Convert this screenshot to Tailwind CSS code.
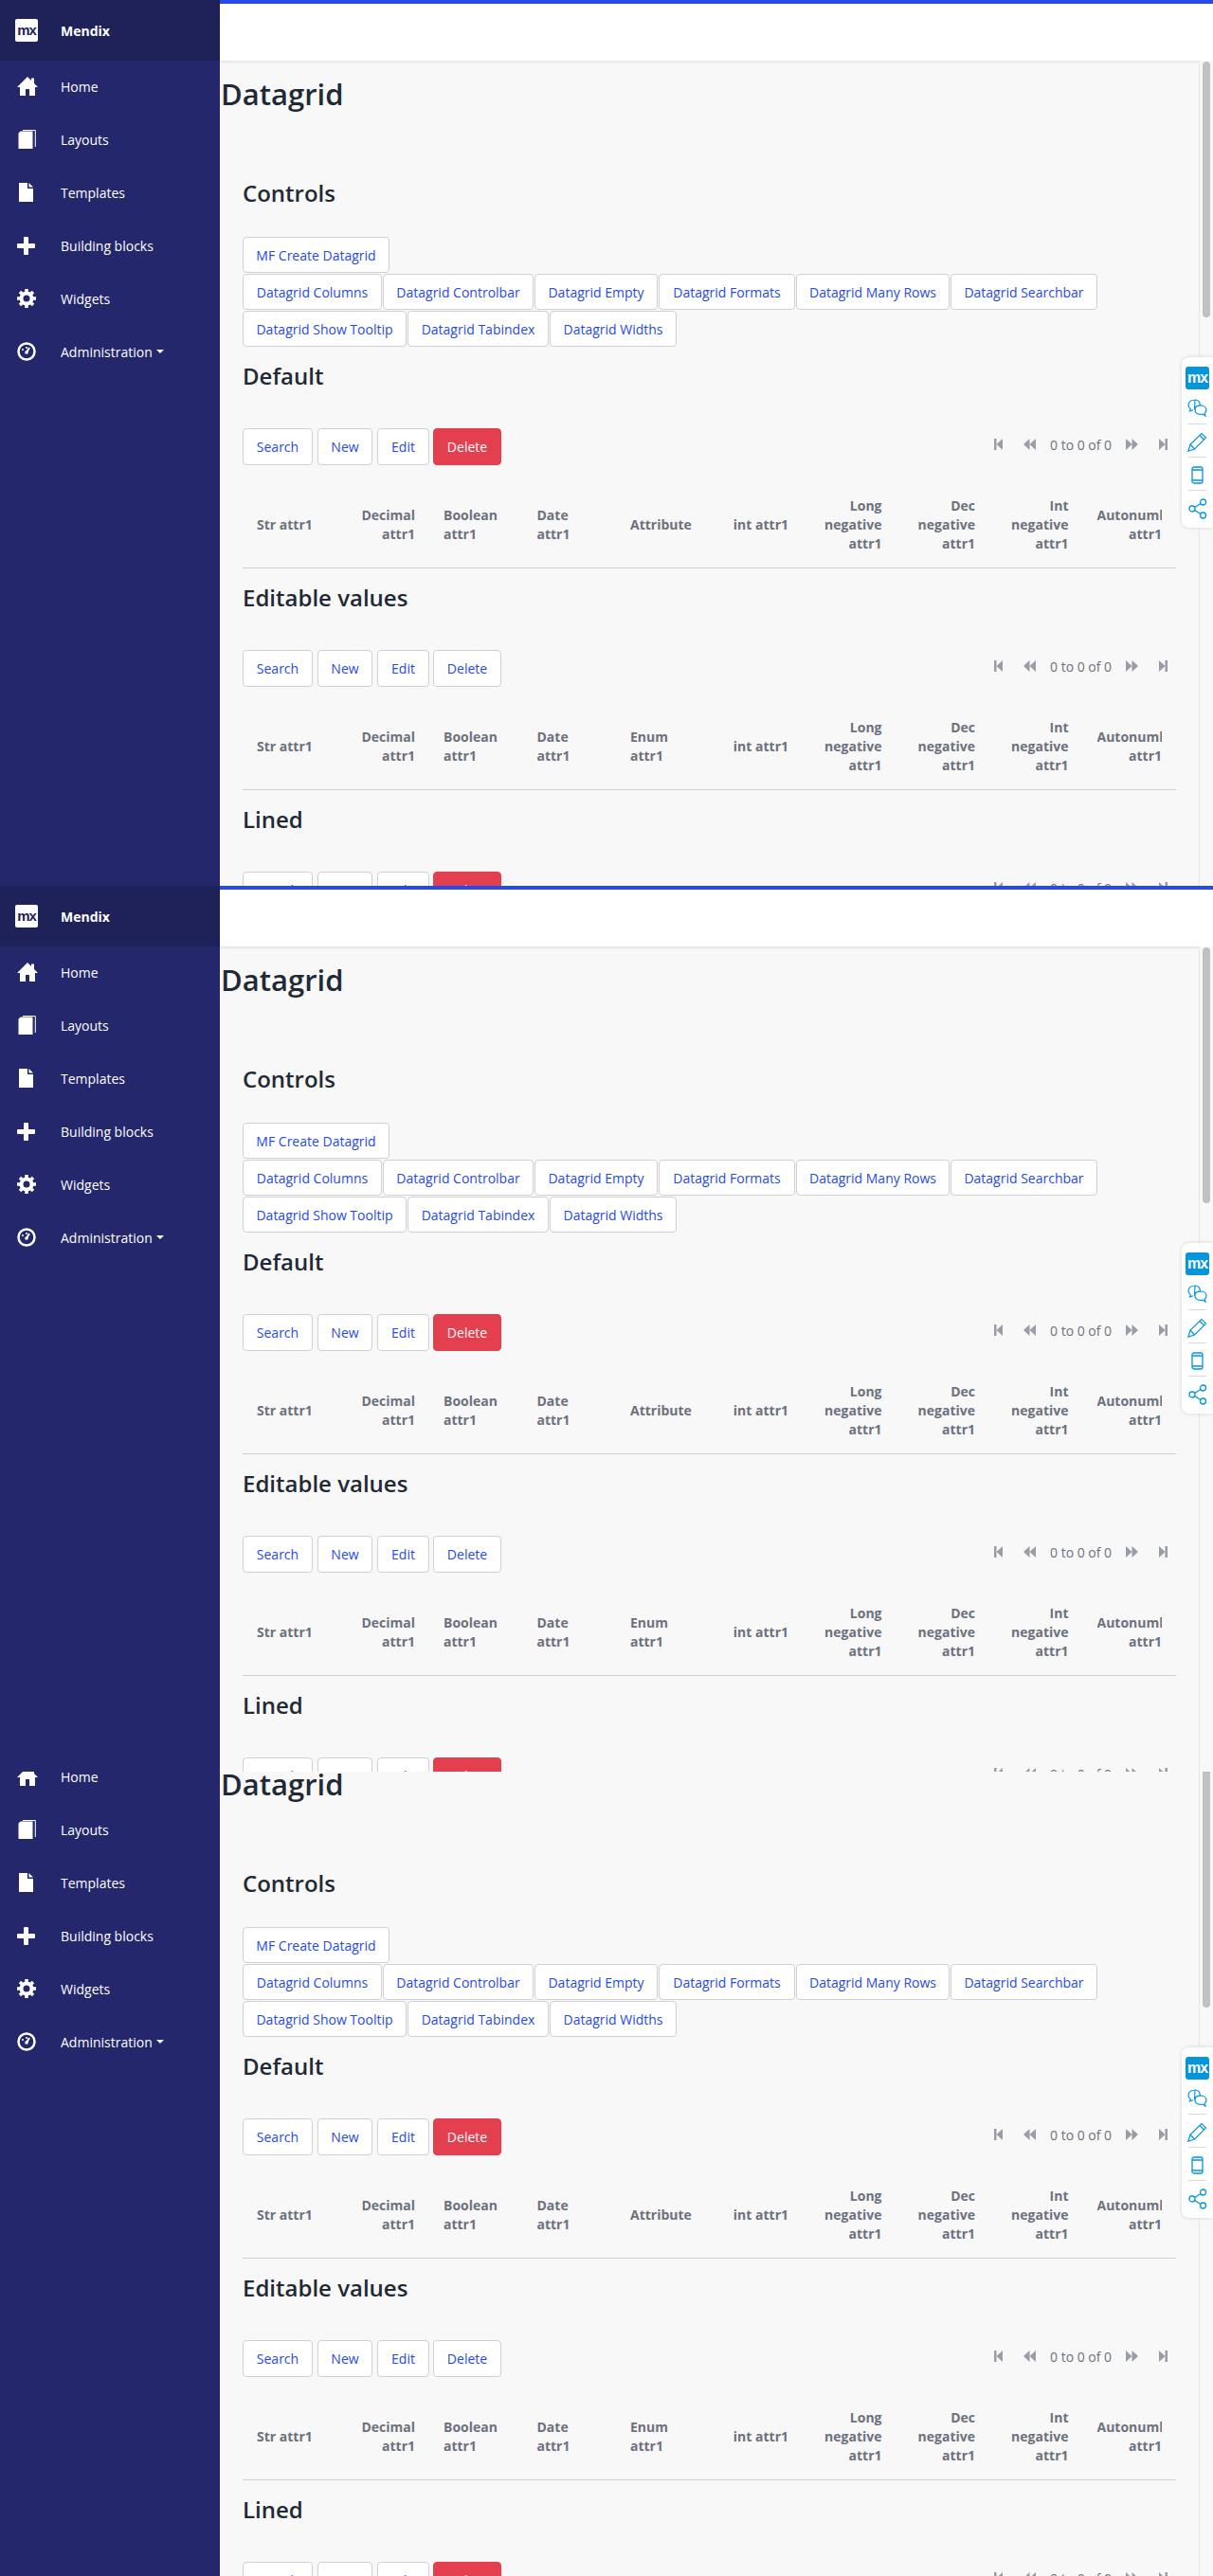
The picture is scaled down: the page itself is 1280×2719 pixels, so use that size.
<!DOCTYPE html>
<html><head><meta charset="utf-8"><script src="https://cdn.jsdelivr.net/npm/@tailwindcss/browser@4"></script></head>
<body class="font-['Open_Sans',sans-serif] text-[14px] bg-[#f8f8f8]">
<template id="tpl">
<div class="relative flex h-[935px] w-[1280px] overflow-hidden bg-[#f8f8f8]">
  <aside class="w-[232px] shrink-0 bg-[#24276c] text-white">
    <div class="flex h-[64px] items-center bg-[#1f2159] pl-[16px]">
      <span class="flex h-[24px] w-[24px] items-center justify-center rounded-[2px] bg-white font-['Liberation_Sans',sans-serif] text-[15px] font-bold tracking-[-1px] text-[#1f2159]">mx</span>
      <span class="ml-[24px] font-bold">Mendix</span>
    </div>
    <nav class="-mt-px">
      <div class="flex h-[56px] items-center"><span class="flex w-[64px] pl-[18px]"><svg width="22" height="20" viewBox="0 0 22 20" fill="#fff"><path d="M11 0 L15 4 V1.500 H18 V7 L22 11 H19 V20 H13 V13 H9 V20 H3 V11 H0 Z"/></svg></span>Home</div>
      <div class="flex h-[56px] items-center"><span class="flex w-[64px] pl-[19px]"><svg width="19" height="20" viewBox="0 0 19 20"><path d="M3 1.500 H15.500 V20 H0.500 V4 Q0.500 2.500 3 1.500Z" fill="#fff"/><path d="M5 0.500 H18.300 V18" fill="none" stroke="#fff" stroke-width="1"/></svg></span>Layouts</div>
      <div class="flex h-[56px] items-center"><span class="flex w-[64px] pl-[20px]"><svg width="15" height="20" viewBox="0 0 15 20" fill="#fff"><path d="M0 0 H9 V6 H15 V20 H0Z M10.500 0 L15 4.500 H10.500Z"/></svg></span>Templates</div>
      <div class="flex h-[56px] items-center"><span class="flex w-[64px] pl-[18px]"><svg width="19" height="19" viewBox="0 0 19 19" fill="#fff"><path d="M7 1 Q7 0 8 0 H11 Q12 0 12 1 V7 H18 Q19 7 19 8 V11 Q19 12 18 12 H12 V18 Q12 19 11 19 H8 Q7 19 7 18 V12 H1 Q0 12 0 11 V8 Q0 7 1 7 H7Z"/></svg></span>Building blocks</div>
      <div class="flex h-[56px] items-center"><span class="flex w-[64px] pl-[18px]"><svg width="20" height="20" viewBox="0 0 20 20"><circle cx="10" cy="10" r="5.500" fill="none" stroke="#fff" stroke-width="4"/><path d="M10 10 V0 M10 10 V20 M10 10 H0 M10 10 H20 M10 10 L3 3 M10 10 L17 17 M10 10 L17 3 M10 10 L3 17" stroke="#fff" stroke-width="3.500" stroke-dasharray="0 7 4 9"/></svg></span>Widgets</div>
      <div class="flex h-[56px] items-center"><span class="flex w-[64px] pl-[18px]"><svg width="20" height="20" viewBox="0 0 20 20"><circle cx="10" cy="10" r="8.500" fill="none" stroke="#fff" stroke-width="2.500"/><path d="M10 11 L13 6" stroke="#fff" stroke-width="2"/><circle cx="6" cy="8" r="1" fill="#fff"/><circle cx="10" cy="6" r="1" fill="#fff"/><circle cx="10" cy="11" r="1.800" fill="#fff"/></svg></span>Administration<span class="ml-[4px] h-0 w-0 border-x-[4px] border-t-[4px] border-x-transparent border-t-white"></span></div>
    </nav>
  </aside>
  <main class="relative flex min-w-0 flex-1 flex-col">
    <div class="h-[64px] shrink-0 border-t-4 border-[#264ae5] bg-white shadow-[0_1px_3px_rgba(0,0,0,0.12)]"></div>
    <div class="relative min-h-0 flex-1 overflow-hidden">
      <div class="w-[1033px] pt-[15px]">
        <h1 class="ml-px text-[31px] font-semibold leading-[40px] text-[#1f2a36]">Datagrid</h1>
        <div class="ml-[24px] w-[985px]">
          <h2 class="mt-[69px] text-[24px] font-semibold leading-[32px] text-[#1f2a36]">Controls</h2>
          <div class="mt-[30px] flex flex-col gap-px text-[#264ae5]">
            <div class="flex gap-px">
              <a class="flex h-[38px] w-[155px] items-center justify-center rounded-[4px] border border-[#ced0d3] bg-white">MF Create Datagrid</a>
            </div>
            <div class="flex gap-px">
              <a class="flex h-[38px] w-[147px] items-center justify-center rounded-[4px] border border-[#ced0d3] bg-white">Datagrid Columns</a>
              <a class="flex h-[38px] w-[159px] items-center justify-center rounded-[4px] border border-[#ced0d3] bg-white">Datagrid Controlbar</a>
              <a class="flex h-[38px] w-[130px] items-center justify-center rounded-[4px] border border-[#ced0d3] bg-white">Datagrid Empty</a>
              <a class="flex h-[38px] w-[144px] items-center justify-center rounded-[4px] border border-[#ced0d3] bg-white">Datagrid Formats</a>
              <a class="flex h-[38px] w-[162px] items-center justify-center rounded-[4px] border border-[#ced0d3] bg-white">Datagrid Many Rows</a>
              <a class="flex h-[38px] w-[155px] items-center justify-center rounded-[4px] border border-[#ced0d3] bg-white">Datagrid Searchbar</a>
            </div>
            <div class="flex gap-px">
              <a class="flex h-[38px] w-[173px] items-center justify-center rounded-[4px] border border-[#ced0d3] bg-white">Datagrid Show Tooltip</a>
              <a class="flex h-[38px] w-[149px] items-center justify-center rounded-[4px] border border-[#ced0d3] bg-white">Datagrid Tabindex</a>
              <a class="flex h-[38px] w-[134px] items-center justify-center rounded-[4px] border border-[#ced0d3] bg-white">Datagrid Widths</a>
            </div>
          </div>

          <section data-grid="Default" data-attr="Attribute" data-del="red"></section>
          <section data-grid="Editable values" data-attr="Enum" data-del="white"></section>
          <section data-grid="Lined" data-attr="Attribute" data-del="red"></section>
        </div>
      </div>
      <div class="absolute bottom-0 right-0 top-0 w-[15px] border-l border-[#e6e6e6] bg-[#f8f8f8]">
        <div class="ml-[3px] mt-px h-[270px] w-[8px] rounded-[4px] bg-[#c1c1c1]"></div>
      </div>
    </div>
    <div class="absolute right-0 top-[377px] flex h-[180px] w-[33px] flex-col items-center rounded-l-[8px] bg-white pt-[10px] shadow-[0_0_4px_rgba(0,0,0,0.15)]">
      <span class="flex h-[24px] w-[25px] items-center justify-center rounded-[3px] bg-[#0595db] font-['Liberation_Sans',sans-serif] text-[16px] font-bold tracking-[-1px] text-white">mx</span>
      <svg class="mt-[10px]" width="21" height="20" viewBox="0 0 21 20" fill="none" stroke="#0595db" stroke-width="1.200"><path d="M8 1 C3.500 1 1 3.500 1 6.500 C1 8.500 2 10 3.500 10.800 L2.500 13 L6 11.800 M7.500 11.500 C7.500 8.500 10 7 13.500 7 C13.500 3 11 1 8 1Z"/><path d="M14 7 C10.500 7 8 9 8 11.800 C8 14.500 10.500 16.300 14 16.300 C15 16.300 15.500 16.200 16 16 L19 18 L18.300 15 C19.400 14.200 20 13 20 11.800 C20 9 17.500 7 14 7Z"/></svg>
      <span class="mt-[6px] h-px w-[19px] bg-[#d8d8d8]"></span>
      <svg class="mt-[8px]" width="21" height="21" viewBox="0 0 21 21" fill="none" stroke="#0595db" stroke-width="1.200"><path d="M1 20 L3 13 L15 1.500 L19.500 6 L7.500 18Z M3 13 L7.500 18 M13 3.500 L17.500 8 M1 20 L4.500 19"/></svg>
      <span class="mt-[5px] h-px w-[19px] bg-[#d8d8d8]"></span>
      <svg class="mt-[9px]" width="13" height="19" viewBox="0 0 13 19" fill="none" stroke="#0595db" stroke-width="1.300"><rect x="1" y="1" width="11" height="17" rx="2"/><path d="M1 4 H12 M1 15 H12"/></svg>
      <span class="mt-[6px] h-px w-[19px] bg-[#d8d8d8]"></span>
      <svg class="mt-[8px]" width="20" height="22" viewBox="0 0 20 22" fill="none" stroke="#0595db" stroke-width="1.300"><circle cx="4" cy="11" r="3"/><circle cx="15.500" cy="4" r="3"/><circle cx="15.500" cy="18" r="3"/><path d="M6.600 9.500 L13 5.500 M6.600 12.500 L13 16.500"/></svg>
    </div>
  </main>
</div>
</template>
<template id="grid">
  <h2 class="mt-[15px] text-[24px] font-semibold leading-[32px] text-[#1f2a36]" data-t></h2>
  <div class="mt-[39px] flex h-[39px] items-start">
    <a class="flex h-[39px] w-[74px] items-center justify-center rounded-[4px] border border-[#ced0d3] bg-white text-[#264ae5]">Search</a>
    <a class="ml-[5px] flex h-[39px] w-[58px] items-center justify-center rounded-[4px] border border-[#ced0d3] bg-white text-[#264ae5]">New</a>
    <a class="ml-[5px] flex h-[39px] w-[55px] items-center justify-center rounded-[4px] border border-[#ced0d3] bg-white text-[#264ae5]">Edit</a>
    <a data-d class="ml-[4px] flex h-[39px] w-[72px] items-center justify-center rounded-[4px] border border-[#ced0d3] bg-white text-[#264ae5]">Delete</a>
    <div class="ml-auto mr-[9px] mt-[7px] flex h-[20px] items-center text-[#6c717e]">
      <svg width="9" height="12" viewBox="0 0 9 12" fill="#9a9ca8"><path d="M0 0 H2.500 V12 H0Z M9 0 V12 L2.500 6Z"/></svg>
      <svg class="ml-[22px]" width="13" height="12" viewBox="0 0 13 12" fill="#9a9ca8"><path d="M6.500 0 V12 L0 6Z M13 0 V12 L6.500 6Z"/></svg>
      <span class="ml-[15px] w-[64px] whitespace-nowrap">0 to 0 of 0</span>
      <svg class="ml-[16px]" width="13" height="12" viewBox="0 0 13 12" fill="#9a9ca8"><path d="M0 0 L6.500 6 L0 12Z M6.500 0 L13 6 L6.500 12Z"/></svg>
      <svg class="ml-[22px]" width="9" height="12" viewBox="0 0 9 12" fill="#9a9ca8"><path d="M0 0 L6.500 6 L0 12Z M6.500 0 H9 V12 H6.500Z"/></svg>
    </div>
  </div>
  <div class="mt-[18px] grid h-[91px] grid-cols-10 items-center border-b border-[#ced0d3] pb-[1px] font-bold leading-[20px] text-[#6c717e]">
    <div class="px-[15px]">Str attr1</div>
    <div class="px-[15px] text-right">Decimal attr1</div>
    <div class="px-[15px]">Boolean attr1</div>
    <div class="px-[15px]">Date attr1</div>
    <div data-a class="px-[15px]"></div>
    <div class="px-[15px] text-right">int attr1</div>
    <div class="px-[15px] text-right">Long negative attr1</div>
    <div class="px-[15px] text-right">Dec negative attr1</div>
    <div class="px-[15px] text-right">Int negative attr1</div>
    <div class="px-[15px]"><div class="overflow-hidden text-right">Autonumber attr1</div></div>
  </div>
</template>
<div id="root"></div>
<script>
const root=document.getElementById('root');
const tpl=document.getElementById('tpl'),grid=document.getElementById('grid');
function page(){
  const f=tpl.content.cloneNode(true);
  f.querySelectorAll('section').forEach(s=>{
    const g=grid.content.cloneNode(true);
    g.querySelector('[data-t]').textContent=s.dataset.grid;
    g.querySelector('[data-a]').textContent=s.dataset.attr==='Enum'?'Enum attr1':'Attribute';
    if(s.dataset.del==='red'){g.querySelector('[data-d]').classList.add('!bg-[#e33f4e]','!border-[#e33f4e]','!text-white');}
    s.appendChild(g);
  });
  return f;
}
root.appendChild(page());root.appendChild(page());
const w=document.createElement('div');w.className='h-[849px] overflow-hidden';
const i=document.createElement('div');i.className='-mt-[86px]';i.appendChild(page());w.appendChild(i);root.appendChild(w);
</script>
</body></html>
